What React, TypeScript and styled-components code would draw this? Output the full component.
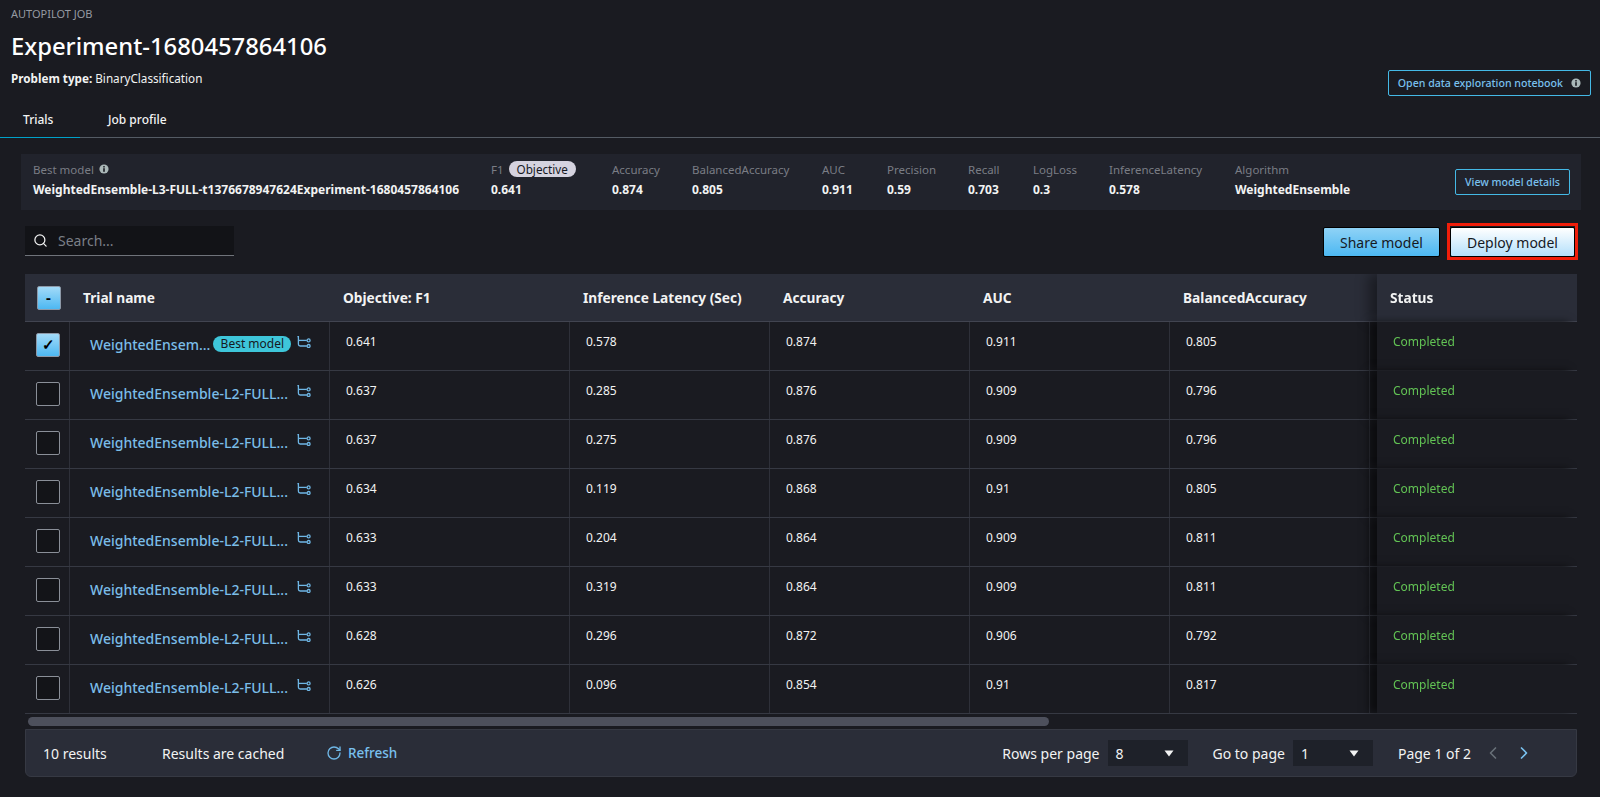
import styled, { createGlobalStyle } from "styled-components";
import { ChevronLeft, ChevronRight, RotateCw, Search as SearchIcon } from "lucide-react";

const Global = createGlobalStyle`
	html, body {
		margin: 0;
		height: 797px;
		overflow: hidden;
		background: #1a1b21;
		color: #f2f3f3;
		font-family: "Noto Sans", "Liberation Sans", sans-serif;
		font-size: 12px;
	}
`;

const metrics = [
	{ label: "Accuracy", value: "0.874", width: 80 },
	{ label: "BalancedAccuracy", value: "0.805", width: 130 },
	{ label: "AUC", value: "0.911", width: 65 },
	{ label: "Precision", value: "0.59", width: 81 },
	{ label: "Recall", value: "0.703", width: 65 },
	{ label: "LogLoss", value: "0.3", width: 76 },
	{ label: "InferenceLatency", value: "0.578", width: 126 },
	{ label: "Algorithm", value: "WeightedEnsemble", width: 220 },
];

const rows = [
	["0.641", "0.578", "0.874", "0.911", "0.805"],
	["0.637", "0.285", "0.876", "0.909", "0.796"],
	["0.637", "0.275", "0.876", "0.909", "0.796"],
	["0.634", "0.119", "0.868", "0.91", "0.805"],
	["0.633", "0.204", "0.864", "0.909", "0.811"],
	["0.633", "0.319", "0.864", "0.909", "0.811"],
	["0.628", "0.296", "0.872", "0.906", "0.792"],
	["0.626", "0.096", "0.854", "0.91", "0.817"],
];

const InfoIcon = () => (
	<svg width="10" height="10" viewBox="0 0 10 10">
		<circle cx="5" cy="5" r="4.6" fill="#aab7b8" />
		<rect x="4.2" y="4.2" width="1.6" height="3.6" fill="#1a1b21" />
		<rect x="4.2" y="2.1" width="1.6" height="1.4" fill="#1a1b21" />
	</svg>
);

const LineageIcon = () => (
	<LineageSvg width="14" height="12" viewBox="0 0 14 12" fill="none" stroke="#6fb7e6" strokeWidth="1.3">
		<path d="M0.4 0.7H1.4V8.2Q1.4 10 3.2 10H9.8" />
		<path d="M1.4 4.4H9.8" />
		<circle cx="11.6" cy="4.4" r="1.5" />
		<circle cx="11.6" cy="10" r="1.5" />
	</LineageSvg>
);

const Caret = () => (
	<svg width="10" height="7" viewBox="0 0 10 7">
		<path d="M0.5 0.5H9.5L5 6.5Z" fill="#f2f3f3" />
	</svg>
);

export default function App() {
	return (
		<Page>
			<Global />
			<Header>
				<div>
					<Eyebrow>AUTOPILOT JOB</Eyebrow>
					<Title>Experiment-1680457864106</Title>
					<ProblemType>
						<b>Problem type:</b> BinaryClassification
					</ProblemType>
				</div>
				<OutlineButton $top={64}>
					Open data exploration notebook
					<InfoIcon />
				</OutlineButton>
			</Header>

			<Tabs>
				<Tab $active>Trials</Tab>
				<Tab>Job profile</Tab>
			</Tabs>

			<Summary>
				<BestModel>
					<MetricLabel>
						Best model <InfoIcon />
					</MetricLabel>
					<MetricValue>WeightedEnsemble-L3-FULL-t1376678947624Experiment-1680457864106</MetricValue>
				</BestModel>
				<Metric $width={121}>
					<MetricLabel>
						F1 <Objective>Objective</Objective>
					</MetricLabel>
					<MetricValue>0.641</MetricValue>
				</Metric>
				{metrics.map((m) => (
					<Metric key={m.label} $width={m.width}>
						<MetricLabel>{m.label}</MetricLabel>
						<MetricValue>{m.value}</MetricValue>
					</Metric>
				))}
				<OutlineButton $top={8}>View model details</OutlineButton>
			</Summary>

			<Toolbar>
				<SearchBox>
					<SearchIcon size={15} color="#f2f3f3" />
					<SearchInput placeholder="Search..." />
				</SearchBox>
				<Actions>
					<PrimaryButton>Share model</PrimaryButton>
					<Highlight>
						<PrimaryButton $light>Deploy model</PrimaryButton>
					</Highlight>
				</Actions>
			</Toolbar>

			<TableScroll>
				<HeadRow>
					<CheckCell>
						<CheckBox $on>-</CheckBox>
					</CheckCell>
					<NameHead>Trial name</NameHead>
					<HeadCell $width={240}>Objective: F1</HeadCell>
					<HeadCell $width={200}>Inference Latency (Sec)</HeadCell>
					<HeadCell $width={200}>Accuracy</HeadCell>
					<HeadCell $width={200}>AUC</HeadCell>
					<HeadCell $width={200}>BalancedAccuracy</HeadCell>
					<HeadCell $width={207} />
					<StatusHead>Status</StatusHead>
				</HeadRow>
				{rows.map((r, i) => (
					<Row key={i}>
						<CheckCell $line>
							<CheckBox $on={i === 0}>{i === 0 ? "✓" : ""}</CheckBox>
						</CheckCell>
						<NameCell>
							<TrialLink>{i === 0 ? "WeightedEnsem..." : "WeightedEnsemble-L2-FULL..."}</TrialLink>
							{i === 0 && <BestBadge>Best model</BestBadge>}
							<LineageIcon />
						</NameCell>
						<DataCell $width={240}>{r[0]}</DataCell>
						<DataCell $width={200}>{r[1]}</DataCell>
						<DataCell $width={200}>{r[2]}</DataCell>
						<DataCell $width={200}>{r[3]}</DataCell>
						<DataCell $width={200}>{r[4]}</DataCell>
						<DataCell $width={207} />
						<StatusCell>Completed</StatusCell>
					</Row>
				))}
			</TableScroll>

			<ScrollTrack>
				<ScrollThumb />
			</ScrollTrack>

			<Footer>
				<FooterGroup>
					<Results>10 results</Results>
					<Cached>Results are cached</Cached>
					<Refresh>
						<RotateCw size={16} color="#6fb7e6" />
						Refresh
					</Refresh>
				</FooterGroup>
				<FooterGroup>
					<Pager>
						Rows per page
						<PageSelect>
							8
							<Caret />
						</PageSelect>
					</Pager>
					<Pager>
						Go to page
						<PageSelect>
							1
							<Caret />
						</PageSelect>
					</Pager>
					<PageOf>Page 1 of 2</PageOf>
					<ChevronLeft size={20} color="#687078" />
					<NextPage>
						<ChevronRight size={20} color="#79c0ee" />
					</NextPage>
				</FooterGroup>
			</Footer>
		</Page>
	);
}

const Page = styled.div`
	width: 1600px;
	height: 797px;
	overflow: hidden;
	display: flex;
	flex-direction: column;
`;

const Header = styled.div`
	height: 113px;
	flex: none;
	padding: 6px 9px 0 11px;
	box-sizing: border-box;
	display: flex;
	justify-content: space-between;
	align-items: flex-start;
`;

const Eyebrow = styled.div`
	font-size: 11px;
	line-height: 16px;
	color: #959aa1;
`;

const Title = styled.h1`
	margin: 7px 0 0;
	font-size: 23.8px;
	line-height: 34px;
	font-weight: 500;
	color: #fff;
`;

const ProblemType = styled.div`
	margin-top: 7px;
	font-size: 11.7px;
	line-height: 16px;
	b {
		font-weight: 700;
	}
`;

const OutlineButton = styled.button<{ $top: number }>`
	height: 26px;
	margin-top: ${(p) => p.$top}px;
	padding: 0 9px;
	display: inline-flex;
	align-items: center;
	gap: 8px;
	background: transparent;
	border: 1px solid #44b9e6;
	border-radius: 2px;
	color: #79c0ee;
	font: 500 10.6px "Noto Sans", sans-serif;
	white-space: nowrap;
`;

const Tabs = styled.div`
	height: 24px;
	flex: none;
	display: flex;
	border-bottom: 1px solid #545b64;
`;

const Tab = styled.div<{ $active?: boolean }>`
	width: ${(p) => (p.$active ? "80px" : "auto")};
	height: 25px;
	padding: ${(p) => (p.$active ? "0 0 0 23px" : "0 0 0 28px")};
	box-sizing: border-box;
	font-size: 12px;
	font-weight: 500;
	line-height: 14px;
	border-bottom: 1px solid ${(p) => (p.$active ? "#00a1c9" : "transparent")};
`;

const Summary = styled.div`
	height: 56px;
	flex: none;
	margin: 16px 19px 0 21px;
	padding: 7px 12px 0;
	box-sizing: border-box;
	background: #21232c;
	display: flex;
	align-items: flex-start;
`;

const Metric = styled.div<{ $width: number }>`
	width: ${(p) => p.$width}px;
	flex: none;
`;

const BestModel = styled.div`
	width: 458px;
	flex: none;
`;

const MetricLabel = styled.div`
	display: flex;
	align-items: center;
	gap: 5px;
	height: 16px;
	color: #7a7d85;
	font-size: 11.5px;
	white-space: nowrap;
`;

const MetricValue = styled.div`
	margin-top: 5px;
	font-size: 12px;
	line-height: 16px;
	font-weight: 700;
	white-space: nowrap;
`;

const Objective = styled.span`
	padding: 0 8px;
	border-radius: 8px;
	background: #d5d3df;
	color: #16191f;
	font-size: 11.7px;
	line-height: 16px;
`;

const Toolbar = styled.div`
	height: 64px;
	flex: none;
	padding: 16px 22px 0 25px;
	box-sizing: border-box;
	display: flex;
	justify-content: space-between;
`;

const SearchBox = styled.div`
	width: 209px;
	height: 30px;
	padding: 0 8px;
	box-sizing: border-box;
	display: flex;
	align-items: center;
	gap: 10px;
	background: #121317;
	border-bottom: 1px solid #6f737a;
`;

const SearchInput = styled.input`
	flex: 1;
	min-width: 0;
	padding: 0;
	background: none;
	border: none;
	outline: none;
	color: #f2f3f3;
	font: 14px "Noto Sans", sans-serif;
	&::placeholder {
		color: #7a7f87;
	}
`;

const Actions = styled.div`
	display: flex;
	gap: 7px;
	align-items: flex-start;
	padding-top: 1px;
`;

const PrimaryButton = styled.button<{ $light?: boolean }>`
	width: ${(p) => (p.$light ? "125px" : "117px")};
	height: 30px;
	padding: 0;
	border: 1px solid #000;
	border-radius: 2px;
	background: ${(p) =>
		p.$light
			? "linear-gradient(#fff, #b4e0fb)"
			: "linear-gradient(#8fd2f6, #4cb8f2)"};
	color: #16191f;
	font: 400 14px "Noto Sans", sans-serif;
`;

const Highlight = styled.div`
	margin-top: -4px;
	padding-top: 1px;
	border: 3px solid #f01e0a;
	display: flex;
`;

const TableScroll = styled.div`
	width: 1552px;
	margin-left: 25px;
	overflow: hidden;
	flex: none;
`;

const HeadRow = styled.div`
	display: flex;
	width: max-content;
	height: 47px;
	background: #2a2d38;
	border-bottom: 1px solid #414450;
	box-sizing: content-box;
	font-size: 13.7px;
	font-weight: 700;
`;

const Row = styled.div`
	display: flex;
	width: max-content;
	height: 48px;
	border-bottom: 1px solid #363943;
`;

const CheckCell = styled.div<{ $line?: boolean }>`
	width: 45px;
	flex: none;
	padding: ${(p) => (p.$line ? "0 0 2px 2px" : "0 0 0 2px")};
	display: flex;
	align-items: center;
	justify-content: center;
	box-sizing: border-box;
	border-right: ${(p) => (p.$line ? "1px solid #2e3039" : "none")};
`;

const CheckBox = styled.div<{ $on?: boolean }>`
	width: 24px;
	height: 24px;
	box-sizing: border-box;
	border: 1px solid ${(p) => (p.$on ? "#8d99a8" : "#8a8f98")};
	border-radius: 2px;
	background: ${(p) => (p.$on ? "linear-gradient(#a2daf8, #4db8f2)" : "#131418")};
	color: #000;
	font-size: 15px;
	font-weight: 700;
	line-height: 21px;
	text-align: center;
`;

const NameHead = styled.div`
	width: 260px;
	flex: none;
	box-sizing: border-box;
	padding-left: 13px;
	display: flex;
	align-items: center;
`;

const NameCell = styled.div`
	width: 260px;
	flex: none;
	box-sizing: border-box;
	padding: 0 18px 4px 20px;
	display: flex;
	align-items: center;
	gap: 3px;
	border-right: 1px solid #2e3039;
`;

const TrialLink = styled.span`
	color: #7abde8;
	font-size: 14px;
	font-weight: 500;
	white-space: nowrap;
`;

const BestBadge = styled.span`
	width: 78px;
	text-align: center;
	border-radius: 8px;
	background: #3ec6da;
	color: #16191f;
	font-size: 12px;
	line-height: 16px;
	white-space: nowrap;
`;

const LineageSvg = styled.svg`
	margin: 0 0 4px auto;
	flex: none;
`;

const HeadCell = styled.div<{ $width: number }>`
	width: ${(p) => p.$width}px;
	flex: none;
	box-sizing: border-box;
	padding-left: 13px;
	display: flex;
	align-items: center;
	white-space: nowrap;
`;

const DataCell = styled.div<{ $width: number }>`
	width: ${(p) => p.$width}px;
	flex: none;
	box-sizing: border-box;
	padding: 12px 0 0 16px;
	font-size: 12px;
	line-height: 16px;
	border-right: 1px solid #2e3039;
`;

const StatusHead = styled.div`
	position: sticky;
	right: 0;
	width: 200px;
	flex: none;
	box-sizing: border-box;
	padding-left: 13px;
	display: flex;
	align-items: center;
	background: #2a2d38;
	box-shadow: -8px 0 12px rgba(0, 0, 0, 0.4);
`;

const StatusCell = styled.div`
	position: sticky;
	right: 0;
	width: 200px;
	flex: none;
	box-sizing: border-box;
	padding: 12px 0 0 16px;
	background: #1a1b21;
	color: #62c354;
	font-size: 12px;
	line-height: 16px;
	box-shadow: -8px 0 8px rgba(0, 0, 0, 0.55);
`;

const ScrollTrack = styled.div`
	height: 15px;
	flex: none;
	margin: 0 23px 0 28px;
	padding-top: 3px;
	box-sizing: border-box;
`;

const ScrollThumb = styled.div`
	width: 1021px;
	height: 9px;
	border-radius: 5px;
	background: #4d505c;
`;

const Footer = styled.div`
	height: 48px;
	width: 1552px;
	flex: none;
	margin-left: 25px;
	box-sizing: border-box;
	padding: 0 42px 0 17px;
	display: flex;
	justify-content: space-between;
	align-items: center;
	background: #2a2d38;
	border: 1px solid #363943;
	border-radius: 0 0 6px 6px;
	font-size: 14px;
`;

const FooterGroup = styled.div`
	display: flex;
	align-items: center;
`;

const Results = styled.span`
	width: 119px;
`;

const Cached = styled.span`
	width: 164px;
`;

const Refresh = styled.span`
	display: flex;
	align-items: center;
	gap: 6px;
	color: #79c0ee;
	font-size: 13.5px;
	font-weight: 500;
`;

const Pager = styled.div`
	display: flex;
	align-items: center;
	gap: 8px;
	margin-right: 25px;
`;

const PageSelect = styled.div`
	width: 80px;
	height: 26px;
	padding: 0 14px 0 8px;
	box-sizing: border-box;
	display: flex;
	align-items: center;
	justify-content: space-between;
	background: #1e2129;
`;

const PageOf = styled.span`
	margin-right: 12px;
`;

const NextPage = styled.span`
	display: flex;
	margin-left: 11px;
`;
